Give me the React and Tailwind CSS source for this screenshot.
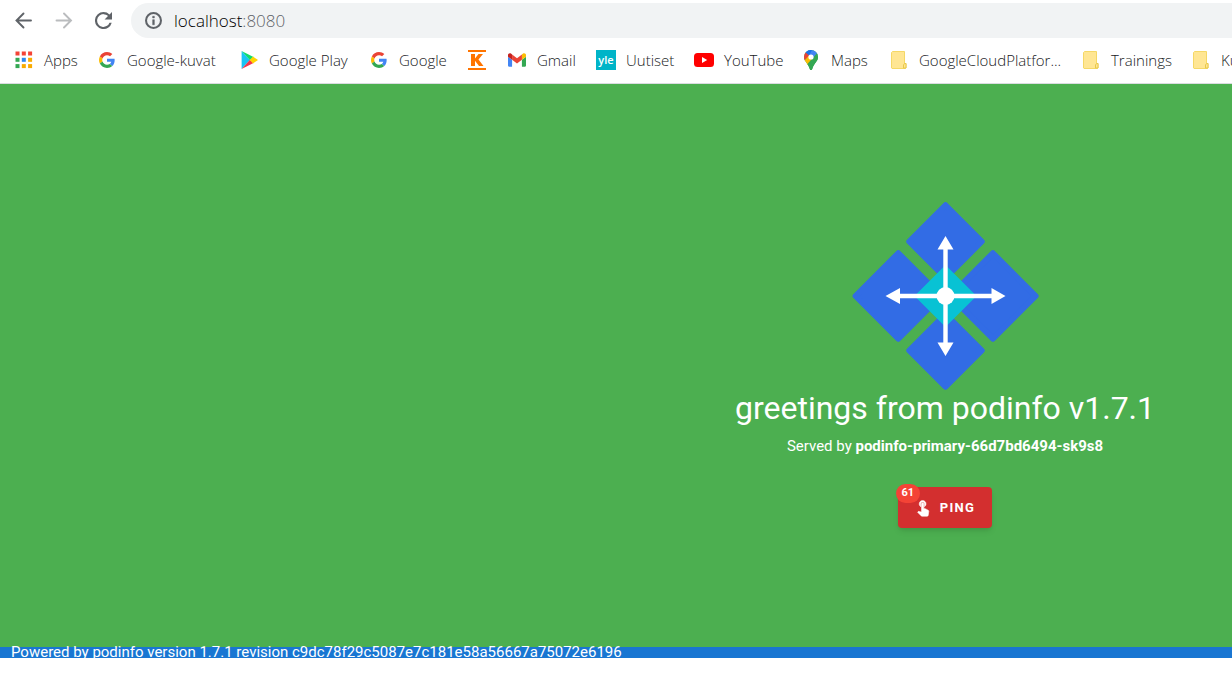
import React from "react";

const chromeFont = "font-['Open_Sans','Noto_Sans',sans-serif]";

function BackIcon() {
  return (
    <svg viewBox="0 0 20 20" className="size-5" fill="none" stroke="currentColor" strokeWidth="1.900" strokeLinecap="round" aria-hidden="true">
      <path d="M17 9.500H3M9.500 2.500L2.500 9.500l7 7" />
    </svg>
  );
}

function ForwardIcon() {
  return (
    <svg viewBox="0 0 20 20" className="size-5" fill="none" stroke="currentColor" strokeWidth="1.900" strokeLinecap="round" aria-hidden="true">
      <path d="M2.500 9.500h14M10 2.500l7 7-7 7" />
    </svg>
  );
}

function ReloadIcon() {
  return (
    <svg viewBox="4 4 16 16" className="size-[17px]" fill="currentColor" aria-hidden="true">
      <path d="M17.65 6.35A7.96 7.96 0 0 0 12 4a8 8 0 1 0 7.73 10h-2.08A6 6 0 1 1 12 6c1.66 0 3.14.69 4.22 1.78L13 11h7V4l-2.35 2.35z" />
    </svg>
  );
}

function InfoIcon() {
  return (
    <svg viewBox="2 2 20 20" className="size-[17px]" fill="currentColor" aria-hidden="true">
      <path d="M11 7h2v2h-2zm0 4h2v6h-2z" stroke="currentColor" strokeWidth=".6" />
      <path d="M12 2a10 10 0 1 0 0 20 10 10 0 0 0 0-20zm0 17.6a7.6 7.6 0 1 1 0-15.200 7.600 7.600 0 0 1 0 15.200z" />
    </svg>
  );
}

function AppsIcon() {
  const colors = ["#f44336", "#f44336", "#f44336", "#34a853", "#2f88f0", "#f9ab00", "#34a853", "#f9ab00", "#f9ab00"];
  return (
    <svg viewBox="0 0 18 18" className="size-[18px]" aria-hidden="true">
      {colors.map((c, i) => (
        <rect key={i} x={0.500 + (i % 3) * 6.300} y={0.500 + Math.floor(i / 3) * 6.300} width="4" height="4" fill={c} />
      ))}
    </svg>
  );
}

function GoogleIcon() {
  return (
    <svg viewBox="0 0 48 48" className="size-4" aria-hidden="true">
      <path fill="#EA4335" d="M24 9.5c3.54 0 6.71 1.22 9.21 3.6l6.85-6.85C35.9 2.38 30.47 0 24 0 14.62 0 6.51 5.38 2.56 13.22l7.98 6.19C12.43 13.72 17.74 9.5 24 9.5z" />
      <path fill="#4285F4" d="M46.98 24.55c0-1.57-.15-3.090-.38-4.550H24v9.020h12.940c-.58 2.960-2.260 5.480-4.780 7.180l7.730 6c4.510-4.180 7.090-10.360 7.090-17.650z" />
      <path fill="#FBBC05" d="M10.53 28.59c-.48-1.450-.76-2.990-.76-4.590s.27-3.140.76-4.590l-7.980-6.190C.92 16.460 0 20.120 0 24c0 3.880.92 7.540 2.560 10.780l7.970-6.190z" />
      <path fill="#34A853" d="M24 48c6.480 0 11.930-2.130 15.890-5.810l-7.730-6c-2.150 1.450-4.920 2.300-8.160 2.300-6.260 0-11.570-4.220-13.470-9.910l-7.980 6.190C6.510 42.620 14.620 48 24 48z" />
    </svg>
  );
}

function PlayIcon() {
  return (
    <svg viewBox="0 0 17 18" className="h-[18px] w-[17px]" aria-hidden="true">
      <path fill="#18c4f4" d="M.6 0v18L9 9z" />
      <path fill="#0fdc6e" d="M.6 0L12.500 6 9 9.200z" />
      <path fill="#f5364c" d="M.6 18L12.500 12 9 8.800z" />
      <path fill="#ffd400" d="M12 5.600L17 9l-5 3.400L8.800 9z" />
    </svg>
  );
}

function KIcon() {
  return (
    <svg viewBox="0 0 18 20" className="h-5 w-[18px]" fill="#ff7400" aria-hidden="true">
      <path d="M0 0h18v2H0zM0 18h18v2H0zM3 4h4v4.500L10.500 4H15l-4.500 5.600L15.500 16H11l-4-5.200V16H3z" />
    </svg>
  );
}

function GmailIcon() {
  return (
    <svg viewBox="52 42 88 66" className="h-[14px] w-[18px]" aria-hidden="true">
      <path fill="#4285f4" d="M58 108h14V74L52 59v43c0 3.320 2.690 6 6 6" />
      <path fill="#34a853" d="M120 108h14c3.320 0 6-2.690 6-6V59l-20 15" />
      <path fill="#fbbc04" d="M120 48v26l20-15v-8c0-7.420-8.470-11.650-14.400-7.200" />
      <path fill="#ea4335" d="M72 74V48l24 18 24-18v26L96 92" />
      <path fill="#c5221f" d="M52 51v8l20 15V48l-5.600-4.200c-5.940-4.450-14.400-.22-14.400 7.200" />
    </svg>
  );
}

function YleIcon() {
  return (
    <span className="flex size-5 items-center justify-center bg-[#00b4c8] text-[11px] leading-5 font-semibold text-white">
      yle
    </span>
  );
}

function YoutubeIcon() {
  return (
    <svg viewBox="0 0 20 14" className="h-[14px] w-5" aria-hidden="true">
      <rect width="20" height="14" rx="3.500" fill="#f00" />
      <path fill="#fff" d="M8 4l5.200 3L8 10z" />
    </svg>
  );
}

function MapsIcon() {
  return (
    <svg viewBox="0 0 14 20" className="h-5 w-[14px]" aria-hidden="true">
      <clipPath id="pin">
        <path d="M7 0a7 7 0 0 1 7 7c0 4.500-3.800 5.800-5.600 11.400C8 19.500 7.600 20 7 20s-1-.5-1.400-1.600C3.800 12.800 0 11.500 0 7a7 7 0 0 1 7-7z" />
      </clipPath>
      <g clipPath="url(#pin)">
        <path fill="#34a853" d="M0 0h14v20H0z" />
        <path fill="#4285f4" d="M2 0h12v4L7 12 3 4z" />
        <path fill="#1a73e8" d="M0 0h8L4.500 6.500 1 3z" />
        <path fill="#ea4335" d="M0 1l1.600 1.500 3.900 3.200L0 11z" />
        <path fill="#fbbc04" d="M0 11l5-5.500 4.500 3.200L3 16z" />
        <path fill="#34a853" d="M3 14.500L14 2v18H3z" />
      </g>
      <circle cx="7" cy="7" r="2.600" fill="#fff" />
    </svg>
  );
}

function FolderIcon() {
  return (
    <svg viewBox="0 0 16 18" className="h-[18px] w-4" aria-hidden="true">
      <path d="M1.500.5h12v12h1.500v4.500l-1 .5H1L.5 17V1.500z" fill="#ffe693" stroke="#f5d866" />
      <path d="M12.500 17v-3l1-1.500h1.500V17z" fill="#ffe693" stroke="#e8c84a" />
    </svg>
  );
}

const bookmarks = [
  { label: "Apps", Icon: AppsIcon },
  { label: "Google-kuvat", Icon: GoogleIcon },
  { label: "Google Play", Icon: PlayIcon },
  { label: "Google", Icon: GoogleIcon },
  { label: "", Icon: KIcon },
  { label: "Gmail", Icon: GmailIcon },
  { label: "Uutiset", Icon: YleIcon },
  { label: "YouTube", Icon: YoutubeIcon },
  { label: "Maps", Icon: MapsIcon },
  { label: "GoogleCloudPlatfor...", Icon: FolderIcon },
  { label: "Trainings", Icon: FolderIcon },
  { label: "Ku", Icon: FolderIcon },
];

function Toolbar() {
  return (
    <div className="flex h-10 items-center pt-px pl-[14px]">
      <button type="button" aria-label="Back" className="text-[#5f6368]">
        <BackIcon />
      </button>
      <button type="button" aria-label="Forward" className="ml-5 text-[#babcbe]">
        <ForwardIcon />
      </button>
      <button type="button" aria-label="Reload" className="ml-[21px] text-[#5f6368]">
        <ReloadIcon />
      </button>
      <div className="ml-[19px] flex h-[35px] grow items-center gap-3 rounded-l-full bg-[#f1f3f4] pl-[14px] text-[#5f6368]">
        <InfoIcon />
        <p className="text-[17px] leading-6 font-light text-[#5f6368]">
          <span className="text-black">localhost</span>:8080
        </p>
      </div>
    </div>
  );
}

function Bookmarks() {
  return (
    <nav
      aria-label="Bookmarks"
      className="grid h-11 grid-cols-[83px_142px_130px_98px_40px_89px_98px_107px_88px_192px_110px_120px] items-center overflow-hidden border-b border-[#dadce0] pb-[3px] pl-[14px]"
    >
      {bookmarks.map(({ label, Icon }, i) => (
        <a key={i} href="#" aria-label={label || "K"} className="flex items-center gap-[10px] whitespace-nowrap">
          <span className="flex w-5 shrink-0 justify-center">
            <Icon />
          </span>
          <span className="text-[15px] leading-5 font-light text-[#202124]">{label}</span>
        </a>
      ))}
    </nav>
  );
}

function PodinfoLogo() {
  return (
    <svg viewBox="11 6 189 189" className="size-[189px]" role="img" aria-label="podinfo">
      <g fill="#326ce5" stroke="#326ce5" strokeWidth="6" strokeLinejoin="round">
        <path d="M105.500 10.300L141.700 46.500 105.500 82.700 69.300 46.500z" />
        <path d="M105.500 119.300L141.700 155.500 105.500 191.700 69.300 155.500z" />
        <path d="M58.300 58.300L101 101 58.300 143.700 15.600 101z" />
        <path d="M152.900 58.300L195.600 101 152.900 143.700 110.200 101z" />
      </g>
      <path fill="#08c2d4" d="M105.500 70L136.500 101 105.500 132 74.500 101z" />
      <g fill="#fff">
        <path d="M103.300 50h4.400v102h-4.400zM55 98.800h101v4.400H55z" />
        <path d="M105.500 41l8 13.500h-16zM105.500 161l8-13.500h-16zM45.500 101l14.500-8v16zM165.500 101l-14-8v16z" />
        <circle cx="105.500" cy="101" r="9" />
      </g>
    </svg>
  );
}

function PingButton() {
  return (
    <button
      type="button"
      className="relative mt-[29px] flex h-[41px] items-center rounded bg-[#d32f2f] pr-[17px] pl-4 text-[13px] font-bold tracking-widest text-white uppercase shadow-md"
    >
      <svg viewBox="0 1 24 24" className="mr-2 size-[18px]" fill="currentColor" aria-hidden="true">
        <path
          stroke="currentColor"
          strokeWidth=".7"
          d="M9 11.24V7.500C9 6.120 10.120 5 11.500 5S14 6.120 14 7.500v3.740c1.210-.81 2-2.180 2-3.740C16 5.010 13.990 3 11.500 3S7 5.010 7 7.500c0 1.560.79 2.930 2 3.740zm9.840 4.630l-4.540-2.260c-.17-.07-.35-.11-.54-.11H13v-6c0-.83-.67-1.500-1.500-1.500S10 6.670 10 7.500v10.740l-3.430-.72c-.08-.01-.15-.03-.24-.03-.31 0-.59.13-.79.33l-.79.8 4.940 4.940c.27.27.65.44 1.060.44h6.790c.75 0 1.330-.55 1.440-1.280l.75-5.270c.01-.07.02-.14.02-.2 0-.62-.38-1.160-.91-1.380z"
        />
      </svg>
      ping
      <span className="absolute -top-[3px] -left-[2px] flex h-[19px] w-6 items-center justify-center rounded-full bg-[#f44336] text-[11px] tracking-normal">
        61
      </span>
    </button>
  );
}

export default function App() {
  return (
    <div className="min-h-screen overflow-hidden bg-white">
      <header className={`bg-white ${chromeFont}`}>
        <Toolbar />
        <Bookmarks />
      </header>
      <div className="overflow-hidden font-[Roboto,sans-serif] text-white">
        <main className="flex flex-col items-center bg-[#4caf50] pt-[117px] pb-[119px] pl-[658px]">
          <PodinfoLogo />
          <h1 className="text-[32px] leading-9 whitespace-nowrap">greetings from podinfo v1.7.1</h1>
          <p className="mt-2 text-[15px] leading-6 whitespace-nowrap">
            Served by <strong className="font-bold">podinfo-primary-66d7bd6494-sk9s8</strong>
          </p>
          <PingButton />
        </main>
        <footer className="flex h-[11px] items-center bg-[#1976d2] pl-[11px]">
          <p className="pb-[2px] text-[15px] leading-5 whitespace-nowrap">
            Powered by podinfo version 1.7.1 revision c9dc78f29c5087e7c181e58a56667a75072e6196
          </p>
        </footer>
      </div>
    </div>
  );
}
